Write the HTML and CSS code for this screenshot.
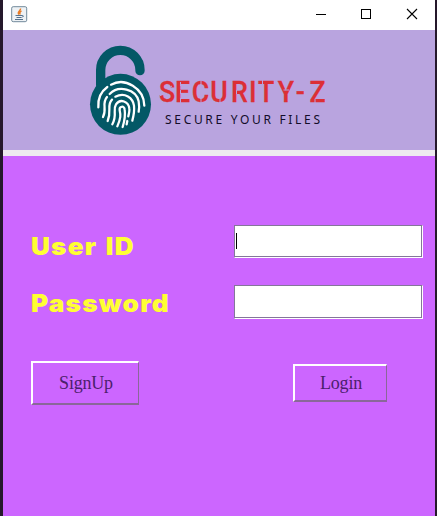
FILE: index.html
```html
<!DOCTYPE html>
<html lang="en">
<head>
<meta charset="utf-8">
<title>Security-Z</title>
<link rel="stylesheet" href="styles.css">
</head>
<body>
<main class="window">
  <div class="titlebar">
    <svg class="java" width="17" height="17" viewBox="0 0 17 17" fill="none">
      <rect x=".7" y=".7" width="15" height="15" rx="1.5" fill="#eef2f5" stroke="#71899b"/>
      <path d="M9.500 2.500C10 5 5.500 5.500 8 8.500M10.500 5C7.500 6 9.500 7 8.800 8.500" stroke="#e97b25" stroke-width="1.500"/>
      <path d="M4.500 9.500H11M5.500 11.500H10.500M4 13.500H12M11 9.500Q14 9.500 11 11.500" stroke="#54718c"/>
    </svg>
    <div class="controls">
      <svg width="12" height="12" viewBox="0 0 12 12"><path d="M1 6.500H11" stroke="#000"/></svg>
      <svg width="12" height="12" viewBox="0 0 12 12"><rect x="1.500" y="1.500" width="9" height="9" fill="none" stroke="#000"/></svg>
      <svg class="close" width="12" height="12" viewBox="0 0 12 12"><path d="M1 1L11 11M11 1L1 11" stroke="#000" stroke-width="1.100"/></svg>
    </div>
  </div>
  <header class="banner">
    <svg width="432" height="120" viewBox="3 30 432 120">
      <g transform="translate(80 35) scale(.33333)" fill="none" stroke-linecap="round">
        <path d="M62 150V105A59 59 0 0 1 180 105V107" stroke="#035866" stroke-width="28"/>
        <circle cx="121.500" cy="208" r="91.500" fill="#035866"/>
        <g transform="translate(36 117)" stroke="#fff" stroke-width="6.800">
          <path d="M19 100C17 73 28 52 46 39M57 32C99 9 156 42 157 95"/>
          <path d="M33 129C46 104 28 88 45 69M53 60C80 32 132 46 140 82C142 94 142 104 140 113"/>
          <path d="M47 141C60 111 43 94 60 77M70 68C99 53 123 72 126 95C128 114 124 129 121 140"/>
          <path d="M61 151C77 121 61 108 72 91C85 72 110 83 112 104C113 111 111 119 109 127"/>
          <path d="M76 157C87 132 86 122 83 109C81 97 97 93 98 107C101 127 96 146 92 159M106 141L104 151"/>
        </g>
      </g>
      <text class="brand" transform="translate(0 102) scale(.92 1)" x="172.800 190.300 208.500 228.500 251 270.700 280.500 302 321.500 336.500">SECURITY-Z</text>
      <path class="stencil" d="M159.500 96L165 93M167 89L172 86M180.500 82V86M180.500 90V94M180.500 98V103M201 79V85M201 98V104M220 97V104M236.500 90V94M262.500 79V84M283.500 90L289 90M315 99V104"/>
      <text class="tagline" x="165" y="124" textLength="155">SECURE YOUR FILES</text>
    </svg>
  </header>
  <form class="login">
    <div class="row first">
      <label for="user">User ID</label>
      <div class="field" id="user"><span class="caret"></span></div>
    </div>
    <div class="row second">
      <label for="password">Password</label>
      <div class="field tall" id="password"></div>
    </div>
    <div class="actions">
      <button type="button" class="signup">SignUp</button>
      <button type="button" class="submit">Login</button>
    </div>
  </form>
</main>
</body>
</html>
```
FILE: styles.css
```css
* { box-sizing: border-box; }
body {
  margin: 0;
  height: 516px;
  overflow: hidden;
  background: #25182b;
}
.window {
  width: 432px;
  height: 516px;
  margin-left: 3px;
  background: #cc66ff;
}
.titlebar {
  display: flex;
  justify-content: space-between;
  height: 30px;
  padding: 6px 17px 0 8px;
  background: #fff;
}
.controls {
  display: flex;
  gap: 33px;
  padding-top: 2px;
}
.controls .close { margin-left: 1px; }
.banner {
  height: 126px;
  background: #b9a4df;
  border-bottom: 6px solid #eee9f0;
}
.banner svg { display: block; }
.brand {
  font: 500 29px Roboto, sans-serif;
  fill: #dc2f36;
  stroke: #dc2f36;
  stroke-width: .3;
}
.stencil {
  fill: none;
  stroke: #b9a4df;
  stroke-width: 1;
}
.tagline {
  font: 12px "Noto Sans", sans-serif;
  fill: #130c29;
}
.login { padding: 69px 12px 0 28px; }
.row {
  display: flex;
  justify-content: space-between;
  height: 60px;
}
/* The scale widens the lettering to extended proportions. */
.row label {
  height: 37px;
  padding-top: 7px;
  font: 900 24px/30px Inter, "Arial Black", sans-serif;
  letter-spacing: 1.1px;
  word-spacing: 2px;
  color: #ffff33;
  transform: scaleX(1.09);
  transform-origin: left;
}
.row.second label {
  padding-top: 4px;
}
.field {
  width: 189px;
  height: 33px;
  padding: 7px 1px;
  background: #fff;
  border: 1px solid #fff;
  border-top-color: #84769a;
  border-left-color: #84769a;
  box-shadow: inset -1px -1px #84769a;
}
.field.tall { height: 34px; }
.caret {
  display: block;
  width: 1px;
  height: 16px;
  background: #000;
}
.actions {
  display: flex;
  justify-content: space-between;
  align-items: center;
  padding: 16px 36px 0 0;
}
button {
  padding: 0 0 0 1px;
  font: 18px "Liberation Serif", serif;
  color: #4b206b;
  background: #cc66ff;
  border: 2px solid #fff;
  border-right: 1px solid #8a6799;
  border-bottom: 2px solid #8a6799;
}
.signup { width: 108px; height: 44px; letter-spacing: -.2px; }
.submit { width: 94px; height: 38px; letter-spacing: -.2px; }
```
